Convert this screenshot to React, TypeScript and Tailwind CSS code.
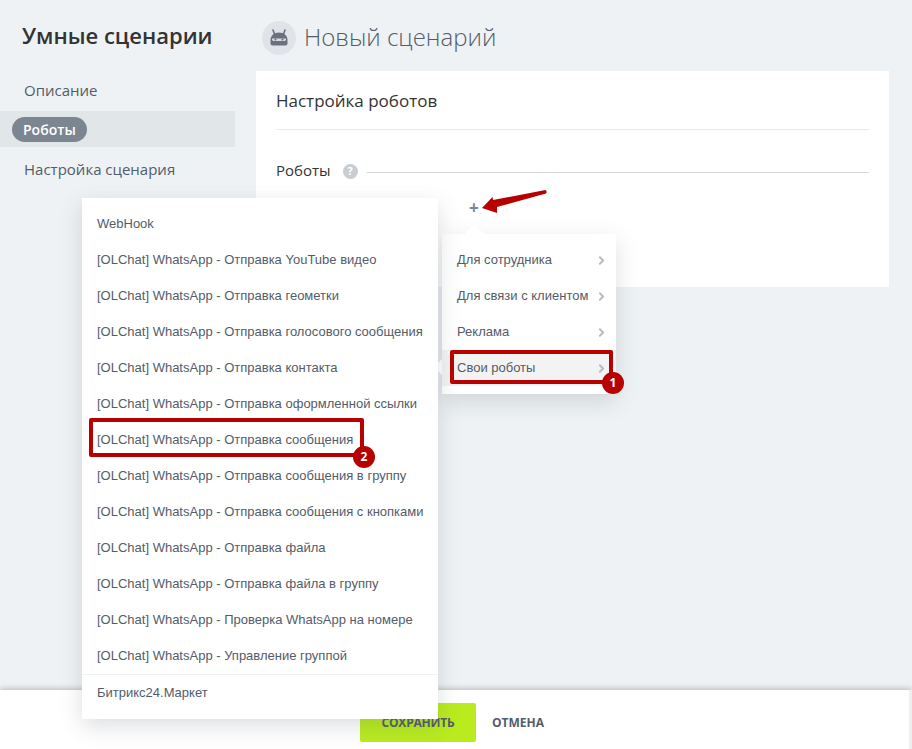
import { ChevronRight } from 'lucide-react';

const robots = [
  '[OLChat] WhatsApp - Отправка YouTube видео',
  '[OLChat] WhatsApp - Отправка геометки',
  '[OLChat] WhatsApp - Отправка голосового сообщения',
  '[OLChat] WhatsApp - Отправка контакта',
  '[OLChat] WhatsApp - Отправка оформленной ссылки',
  '[OLChat] WhatsApp - Отправка сообщения',
  '[OLChat] WhatsApp - Отправка сообщения в группу',
  '[OLChat] WhatsApp - Отправка сообщения с кнопками',
  '[OLChat] WhatsApp - Отправка файла',
  '[OLChat] WhatsApp - Отправка файла в группу',
  '[OLChat] WhatsApp - Проверка WhatsApp на номере',
  '[OLChat] WhatsApp - Управление группой',
];

const categories = ['Для сотрудника', 'Для связи с клиентом', 'Реклама', 'Свои роботы'];

function Badge({ n, className }: { readonly n: number; readonly className: string }) {
  return (
    <span className={`absolute flex h-[22px] w-[22px] items-center justify-center rounded-full bg-[#b70000] text-[12px] font-bold text-white ${className}`}>
      {n}
    </span>
  );
}

function RobotIcon() {
  return (
    <svg viewBox="0 0 20 18" className="h-[18px] w-[20px]">
      <path d="M5.500 5 4 1M14.500 5 16 1" stroke="#68727f" strokeWidth="1.600" strokeLinecap="round" />
      <path d="M1.500 11C1.500 6.500 5 3.500 10 3.500S18.500 6.500 18.500 11v3.500c0 1.100-.9 2-2 2h-13c-1.100 0-2-.9-2-2z" fill="#68727f" />
      <path d="M4 9.500h12c.8 0 1.200.5 1 1.200-.3.800-1 1.300-2 1.300H5c-1 0-1.700-.5-2-1.300-.2-.7.200-1.200 1-1.200z" fill="#d5d9dd" />
      <circle cx="6.500" cy="10.500" r="1" fill="#68727f" />
      <circle cx="13.500" cy="10.500" r="1" fill="#68727f" />
    </svg>
  );
}

export default function App() {
  return (
    <div className="relative h-[749px] w-[912px] overflow-hidden bg-[#eef2f4] font-['Open_Sans',sans-serif] text-[#333]">
      <div className="flex">
        {/* Sidebar */}
        <aside className="w-[235px] shrink-0 pt-[20px]">
          <h1 className="pl-[22px] text-[22px] leading-[30px] font-semibold text-[#333]">Умные сценарии</h1>
          <nav className="mt-[22px] text-[15px] text-[#535c69]">
            <div className="flex h-[36px] items-center pl-[24px]">Описание</div>
            <div className="mt-[3px] flex h-[36px] items-center bg-[#e1e6e9] pl-[12px]">
              <span className="rounded-full bg-[#7b8691] px-[11px] text-[14px] leading-[25px] font-semibold text-white">Роботы</span>
            </div>
            <div className="mt-[4px] flex h-[36px] items-center pl-[24px]">Настройка сценария</div>
          </nav>
        </aside>

        {/* Main */}
        <main className="ml-[21px] w-[633px] pt-[21px]">
          <div className="flex h-[33px] items-center">
            <span className="ml-[6px] flex h-[34px] w-[34px] items-center justify-center rounded-full bg-[#e0e4e8]">
              <RobotIcon />
            </span>
            <span className="mb-[2px] ml-[8px] text-[24px] font-light text-[#535c69]">Новый сценарий</span>
          </div>
          <section className="mt-[17px] h-[216px] bg-white px-[20px]">
            <div className="flex h-[59px] items-center border-b border-[#e9ecee] pt-[2px] text-[17px] text-[#333]">Настройка роботов</div>
            <div className="mt-[30px] flex h-[24px] items-center">
              <span className="mb-[4px] text-[15px] text-[#333]">Роботы</span>
              <span className="mb-[2px] ml-[12px] flex h-[15px] w-[15px] items-center justify-center rounded-full bg-[#c8cdd2] text-[11px] font-bold text-white">?</span>
              <span className="ml-[9px] h-px flex-1 bg-[#d5d8db]" />
            </div>
          </section>
        </main>
      </div>

      {/* Footer */}
      <footer className="absolute bottom-0 left-0 h-[59px] w-full bg-[#efefef] shadow-[0_-1px_6px_rgba(0,0,0,0.25)]">
        <div className="flex h-full w-[909px] items-start bg-white pt-[13px] pl-[360px]">
          <button className="h-[39px] w-[116px] rounded-[2px] bg-[#b9eb1e] text-[12px] font-bold tracking-[-0.2px] text-[#535c69]">СОХРАНИТЬ</button>
          <button className="ml-[16px] h-[39px] text-[12px] font-bold text-[#535c69]">ОТМЕНА</button>
        </div>
      </footer>

      {/* Plus */}
      <span className="absolute top-[195px] left-[469px] text-[17px] leading-[26px] font-bold text-[#7b8691]">+</span>

      {/* Category popup */}
      <div className="absolute top-[234px] left-[442px] w-[174px] bg-white py-[8px] font-['Liberation_Sans',sans-serif] text-[13px] text-[#535c69] shadow-[0_7px_21px_rgba(83,92,105,0.2)]">
        <span className="absolute -top-[7px] left-[25px] h-[14px] w-[14px] rotate-45 bg-white" />
        <span className="absolute top-[126px] -left-[5px] h-[14px] w-[14px] rotate-45 bg-white" />
        {categories.map((label, i) => (
          <div key={label} className={`relative flex h-[36px] items-center justify-between pr-[8px] pl-[15px] ${i === 3 ? 'bg-[#f3f3f3]' : ''}`}>
            <span>{label}</span>
            <ChevronRight size={13} strokeWidth={3.500} className="text-[#b6bbc1]" />
          </div>
        ))}
      </div>

      {/* Robots popup */}
      <div className="absolute top-[198px] left-[82px] w-[356px] bg-white pt-[8px] font-['Liberation_Sans',sans-serif] text-[13px] text-[#535c69] shadow-[0_7px_21px_rgba(83,92,105,0.2)]">
        <div className="flex h-[36px] items-center pl-[15px]">WebHook</div>
        {robots.map((label) => (
          <div key={label} className="flex h-[36px] items-center pl-[15px] whitespace-nowrap">{label}</div>
        ))}
        <div className="h-[37px] border-t border-[#eef2f4] pl-[15px] leading-[35px]">Битрикс24.Маркет</div>
        <div className="h-[8px]" />
      </div>

      {/* Annotations */}
      <div className="absolute top-[350px] left-[450px] h-[34px] w-[163px] rounded-[2px] border-[4px] border-[#b70000]" />
      <Badge n={1} className="top-[372px] left-[602px]" />
      <div className="absolute top-[418px] left-[89px] h-[39px] w-[275px] rounded-[2px] border-[4px] border-[#b70000]" />
      <Badge n={2} className="top-[446px] left-[353px]" />
      <svg className="absolute top-[188px] left-[480px]" width="70" height="28" viewBox="0 0 70 28">
        <path d="M2 20 L12.500 9 L13 12 L65.500 2 Q67.500 3.500 66 5.500 L17 19 L17 25 Z" fill="#b70000" />
      </svg>
    </div>
  );
}
